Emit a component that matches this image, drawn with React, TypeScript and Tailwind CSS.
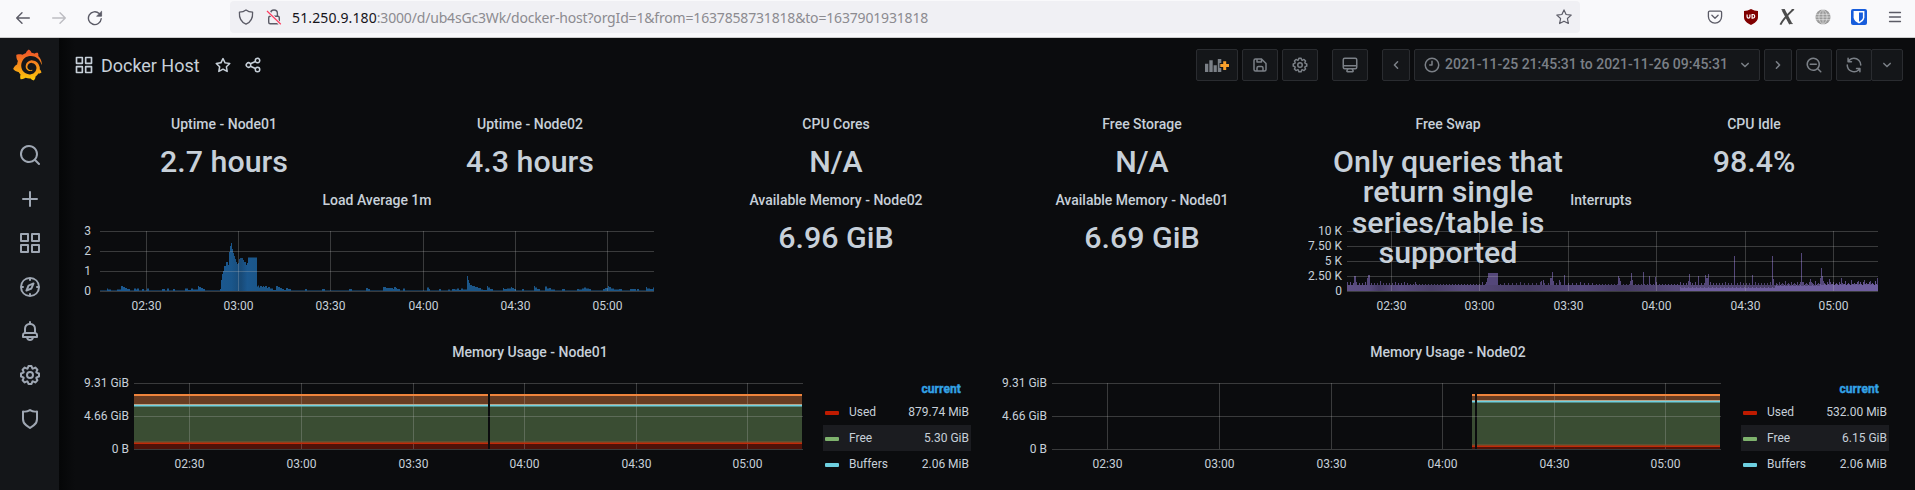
import React from "react";
import { SiGrafana } from "react-icons/si";

const ICONS = {
  search:
    "M21.71,20.29,18,16.61A9,9,0,1,0,16.61,18l3.68,3.68a1,1,0,0,0,1.42,0A1,1,0,0,0,21.71,20.29ZM11,18a7,7,0,1,1,7-7A7,7,0,0,1,11,18Z",
  plus: "M19,11H13V5a1,1,0,0,0-2,0v6H5a1,1,0,0,0,0,2h6v6a1,1,0,0,0,2,0V13h6a1,1,0,0,0,0-2Z",
  apps: "M10,13H3a1,1,0,0,0-1,1v7a1,1,0,0,0,1,1h7a1,1,0,0,0,1-1V14A1,1,0,0,0,10,13ZM9,20H4V15H9ZM21,2H14a1,1,0,0,0-1,1v7a1,1,0,0,0,1,1h7a1,1,0,0,0,1-1V3A1,1,0,0,0,21,2ZM20,9H15V4h5Zm1,4H14a1,1,0,0,0-1,1v7a1,1,0,0,0,1,1h7a1,1,0,0,0,1-1V14A1,1,0,0,0,21,13Zm-1,7H15V15h5ZM10,2H3A1,1,0,0,0,2,3v7a1,1,0,0,0,1,1h7a1,1,0,0,0,1-1V3A1,1,0,0,0,10,2ZM9,9H4V4H9Z",
  compass:
    "M12,2A10,10,0,1,0,22,12,10,10,0,0,0,12,2Zm1,17.93V19a1,1,0,0,0-2,0v.93A8,8,0,0,1,4.07,13H5a1,1,0,0,0,0-2H4.07A8,8,0,0,1,11,4.07V5a1,1,0,0,0,2,0V4.07A8,8,0,0,1,19.93,11H19a1,1,0,0,0,0,2h.93A8,8,0,0,1,13,19.93ZM15.14,7.55l-5,2.12a1,1,0,0,0-.52.52l-2.12,5a1,1,0,0,0,.21,1.1,1,1,0,0,0,.7.3.93.93,0,0,0,.4-.09l5-2.12a1,1,0,0,0,.52-.52l2.12-5a1,1,0,0,0-1.31-1.31Zm-2.49,5.1-2.28,1,1-2.28,2.28-1Z",
  bell: "M18,13.18V10a6,6,0,0,0-5-5.91V3a1,1,0,0,0-2,0V4.09A6,6,0,0,0,6,10v3.18A3,3,0,0,0,4,16v2a1,1,0,0,0,1,1H8.14a4,4,0,0,0,7.72,0H19a1,1,0,0,0,1-1V16A3,3,0,0,0,18,13.18ZM8,10a4,4,0,0,1,8,0v3H8Zm4,10a2,2,0,0,1-1.72-1h3.44A2,2,0,0,1,12,20Zm6-3H6V16a1,1,0,0,1,1-1H17a1,1,0,0,1,1,1Z",
  cog: "M21.32,9.55l-1.89-.63.89-1.78A1,1,0,0,0,20.13,6L18,3.87a1,1,0,0,0-1.15-.19l-1.78.89-.63-1.89A1,1,0,0,0,13.5,2h-3a1,1,0,0,0-.95.68L8.92,4.57,7.14,3.68A1,1,0,0,0,6,3.87L3.87,6a1,1,0,0,0-.19,1.15l.89,1.78-1.89.63A1,1,0,0,0,2,10.5v3a1,1,0,0,0,.68.95l1.89.63-.89,1.78A1,1,0,0,0,3.87,18L6,20.13a1,1,0,0,0,1.15.19l1.78-.89.63,1.89a1,1,0,0,0,.95.68h3a1,1,0,0,0,.95-.68l.63-1.89,1.78.89A1,1,0,0,0,18,20.13L20.13,18a1,1,0,0,0,.19-1.15l-.89-1.78,1.89-.63A1,1,0,0,0,22,13.5v-3A1,1,0,0,0,21.32,9.55ZM20,12.78l-1.2.4A2,2,0,0,0,17.64,16l.57,1.14-1.1,1.1L16,17.64a2,2,0,0,0-2.79,1.16l-.4,1.2H11.22l-.4-1.2A2,2,0,0,0,8,17.64l-1.14.57-1.1-1.1L6.36,16A2,2,0,0,0,5.2,13.18L4,12.78V11.22l1.2-.4A2,2,0,0,0,6.36,8L5.79,6.89l1.1-1.1L8,6.36A2,2,0,0,0,10.82,5.2l.4-1.2h1.56l.4,1.2A2,2,0,0,0,16,6.36l1.14-.57,1.1,1.1L17.64,8a2,2,0,0,0,1.16,2.79l1.2.4ZM12,8a4,4,0,1,0,4,4A4,4,0,0,0,12,8Zm0,6a2,2,0,1,1,2-2A2,2,0,0,1,12,14Z",
  shield:
    "M19.63,3.65a1,1,0,0,0-.84-.2,8,8,0,0,1-6.22-1.27,1,1,0,0,0-1.14,0A8,8,0,0,1,5.21,3.45a1,1,0,0,0-.84.2A1,1,0,0,0,4,4.43v7.45a9,9,0,0,0,3.77,7.33l3.65,2.6a1,1,0,0,0,1.16,0l3.65-2.6A9,9,0,0,0,20,11.88V4.43A1,1,0,0,0,19.63,3.65ZM18,11.88a7,7,0,0,1-2.93,5.7L12,19.77,8.93,17.58A7,7,0,0,1,6,11.88V5.58a10,10,0,0,0,6-1.39,10,10,0,0,0,6,1.39Z",
  star: "M22,9.67A1,1,0,0,0,21.14,9l-5.69-.83L12.9,3a1,1,0,0,0-1.8,0L8.55,8.16,2.86,9a1,1,0,0,0-.81.68,1,1,0,0,0,.25,1l4.13,4-1,5.68A1,1,0,0,0,6.9,21.44L12,18.77l5.1,2.67a.93.93,0,0,0,.46.12,1,1,0,0,0,.59-.19,1,1,0,0,0,.4-1l-1-5.68,4.13-4A1,1,0,0,0,22,9.67Zm-6.15,4a1,1,0,0,0-.29.88l.72,4.2-3.76-2a1.06,1.06,0,0,0-.94,0l-3.76,2,.72-4.2a1,1,0,0,0-.29-.88l-3-3,4.21-.61a1,1,0,0,0,.76-.55L12,5.7l1.88,3.82a1,1,0,0,0,.76.55l4.21.61Z",
  share:
    "M18,14a4,4,0,0,0-3.08,1.48l-5.1-2.35a3.64,3.64,0,0,0,0-2.26l5.1-2.35A4,4,0,1,0,14,6a4.17,4.17,0,0,0,.07.71L8.79,9.14a4,4,0,1,0,0,5.72l5.28,2.43A4.17,4.17,0,0,0,14,18a4,4,0,1,0,4-4ZM18,4a2,2,0,1,1-2,2A2,2,0,0,1,18,4ZM6,14a2,2,0,1,1,2-2A2,2,0,0,1,6,14Zm12,6a2,2,0,1,1,2-2A2,2,0,0,1,18,20Z",
  save: "M20.71,9.29l-6-6a1,1,0,0,0-.32-.21A1.09,1.09,0,0,0,14,3H6A3,3,0,0,0,3,6V18a3,3,0,0,0,3,3H18a3,3,0,0,0,3-3V10A1,1,0,0,0,20.71,9.29ZM9,5h4V7H9Zm6,14H9V16a1,1,0,0,1,1-1h4a1,1,0,0,1,1,1Zm4-1a1,1,0,0,1-1,1H17V16a3,3,0,0,0-3-3H10a3,3,0,0,0-3,3v3H6a1,1,0,0,1-1-1V6A1,1,0,0,1,6,5H7V8A1,1,0,0,0,8,9h6a1,1,0,0,0,1-1V6.41l4,4Z",
  monitor:
    "M19,2H5A3,3,0,0,0,2,5V15a3,3,0,0,0,3,3H7.64l-.58,1a2,2,0,0,0,0,2,2,2,0,0,0,1.75,1h6.46A2,2,0,0,0,17,21a2,2,0,0,0,0-2l-.59-1H19a3,3,0,0,0,3-3V5A3,3,0,0,0,19,2ZM8.77,20,10,18H14l1.2,2ZM20,15a1,1,0,0,1-1,1H5a1,1,0,0,1-1-1V14H20Zm0-3H4V5A1,1,0,0,1,5,4H19a1,1,0,0,1,1,1Z",
  clock:
    "M12,6a1,1,0,0,0-1,1v4H9a1,1,0,0,0,0,2h3a1,1,0,0,0,1-1V7A1,1,0,0,0,12,6Zm0-4A10,10,0,1,0,22,12,10,10,0,0,0,12,2Zm0,18a8,8,0,1,1,8-8A8,8,0,0,1,12,20Z",
  zoomOut:
    "M21.71,20.29,18,16.61A9,9,0,1,0,16.61,18l3.68,3.68a1,1,0,0,0,1.42,0A1,1,0,0,0,21.71,20.29ZM11,18a7,7,0,1,1,7-7A7,7,0,0,1,11,18Zm4-8H7a1,1,0,0,0,0,2h8a1,1,0,0,0,0-2Z",
  sync: "M19.91,15.51H15.38a1,1,0,0,0,0,2h2.4A8,8,0,0,1,4,12a1,1,0,0,0-2,0,10,10,0,0,0,16.88,7.23V21a1,1,0,0,0,2,0V16.5A1,1,0,0,0,19.91,15.51ZM12,2A10,10,0,0,0,5.12,4.77V3a1,1,0,0,0-2,0V7.5a1,1,0,0,0,1,1h4.5a1,1,0,0,0,0-2H6.22A8,8,0,0,1,20,12a1,1,0,0,0,2,0A10,10,0,0,0,12,2Z",
  angle:
    "M17,9.17a1,1,0,0,0-1.41,0L12,12.71,8.46,9.17a1,1,0,0,0-1.41,0,1,1,0,0,0,0,1.42l4.24,4.24a1,1,0,0,0,1.42,0L17,10.59A1,1,0,0,0,17,9.17Z",
};

function Icon({ name, className = "size-[18px]" }: { name: keyof typeof ICONS; className?: string }) {
  return (
    <svg viewBox="0 0 24 24" fill="currentColor" className={`shrink-0 ${className}`}>
      <path d={ICONS[name]} />
    </svg>
  );
}

/* ---------- Browser toolbar ---------- */

function BrowserBar() {
  return (
    <header className="flex h-[38px] items-start border-b border-[#cccccc] bg-[#f9f9fb] pt-px">
      <div className="flex h-8 w-[230px] items-center gap-5 pl-[15px] text-[#5b5b66]">
        <svg viewBox="0 0 16 16" className="mt-0.5 size-4" fill="none" stroke="currentColor" strokeWidth="1.4" strokeLinecap="round" strokeLinejoin="round">
          <path d="M14.3 8H1.7M7 2.7 1.7 8 7 13.3" />
        </svg>
        <svg viewBox="0 0 16 16" className="mt-0.5 size-4 text-[#bdbdc2]" fill="none" stroke="currentColor" strokeWidth="1.4" strokeLinecap="round" strokeLinejoin="round">
          <path d="M1.7 8h12.6M9 2.7 14.3 8 9 13.3" />
        </svg>
        <svg viewBox="0 0 16 16" className="mt-0.5 size-4" fill="none" stroke="currentColor" strokeWidth="1.4" strokeLinecap="round">
          <path d="M14.2 8.8A6.4 6.4 0 1 1 12.2 3.5" />
          <path d="M14.6 1.6v4.6H10z" fill="currentColor" strokeWidth=".8" strokeLinejoin="round" />
        </svg>
      </div>
      <div className="flex h-8 w-[1350px] items-center rounded-[4px] bg-[#f0f0f4] pr-2 pl-2">
        <svg viewBox="0 0 16 16" className="size-4" fill="none" stroke="#5b5b66" strokeWidth="1.3" strokeLinejoin="round">
          <path d="M8 .9c2 1.5 4.300 2.100 6.600 2.300.3 4.800-1.200 9.600-6.600 12C2.600 12.800 1.100 8 1.400 3.200 3.700 3 6 2.400 8 .9z" />
        </svg>
        <svg viewBox="0 0 16 16" className="ml-3 size-4" fill="none" stroke="#5b5b66" strokeWidth="1.4">
          <path d="M4.600 7.200V4.400a3.400 3.400 0 0 1 6.800 0v2.800" />
          <rect x="2.700" y="7.200" width="10.600" height="7.600" rx="1.500" />
          <path d="M1.300 1.800 14.500 15.400" stroke="#f0f0f4" strokeWidth="3" />
          <path d="M1 2 14.800 15.200" stroke="#ff3d60" strokeWidth="1.200" />
        </svg>
        <p className="ml-[10px] grow text-[14px] tracking-[-0.175px] whitespace-nowrap text-[#8c8b90] [font-family:'Noto_Sans',sans-serif]">
          <span className="tracking-[0.12px] text-[#15141a]">51.250.9.180</span>
          :3000/d/ub4sGc3Wk/docker-host?orgId=1&amp;from=1637858731818&amp;to=1637901931818
        </p>
        <svg viewBox="0 0 16 16" className="size-4" fill="none" stroke="#5b5b66" strokeWidth="1.200" strokeLinejoin="round">
          <path d="m8 .9 2.100 4.600 5.100.6-3.800 3.400 1 5L8 12.200l-4.400 2.300 1-5L.8 6.100l5.100-.6z" />
        </svg>
      </div>
      <div className="flex h-8 grow items-center justify-end gap-5 pr-3 text-[#5b5b66]">
        <svg viewBox="0 0 16 16" className="size-4" fill="none" stroke="currentColor" strokeWidth="1.300" strokeLinecap="round" strokeLinejoin="round">
          <path d="M2.700 2.200h10.600a1.300 1.300 0 0 1 1.300 1.300v4A6.600 6.600 0 0 1 1.400 7.500v-4a1.300 1.300 0 0 1 1.300-1.300z" />
          <path d="M4.900 6.300 8 9.300l3.100-3" />
        </svg>
        <svg viewBox="0 0 16 16" className="size-4">
          <path d="M8 0c2.200 1.300 4.600 1.800 7 1.900V8c0 3.900-3.200 6.200-7 8-3.800-1.800-7-4.100-7-8V1.900C3.400 1.800 5.800 1.300 8 0z" fill="#800000" />
          <path d="M4.100 5.500v2.300a1.400 1.400 0 0 0 2.800 0V5.500M9.100 9.200V5.500h.8a1.850 1.850 0 0 1 0 3.700z" fill="none" stroke="#fff" strokeWidth="1.200" />
        </svg>
        <svg viewBox="0 0 16 16" className="size-4" fill="none" stroke="#4c4c4c">
          <path d="M4.200.7 11.600 14.700" strokeWidth="3.200" />
          <path d="M14.400.3C11 3.500 4 10 1.400 15.700" strokeWidth="1.900" />
          <path d="M2.500.6h3M10.500 14.600h3.200M12.700.6h2.500" strokeWidth="1" />
        </svg>
        <svg viewBox="0 0 16 16" className="size-4">
          <circle cx="8" cy="8" r="7.600" fill="#9a9a9a" />
          <path d="M0 5.300h16M0 8h16M0 10.700h16M8 0v16M8 .4C2.500 4 2.500 12 8 15.600M8 .4c5.500 3.600 5.500 11.600 0 15.200" fill="none" stroke="#f1f1f1" strokeWidth=".6" />
        </svg>
        <svg viewBox="0 0 16 16" className="size-4">
          <rect width="16" height="16" rx="2" fill="#175ddc" />
          <path d="M2.600 2h10.800v6.300c0 3-2.500 4.900-5.400 6.200-2.900-1.300-5.400-3.200-5.400-6.200z" fill="#fff" />
          <path d="M8 3.500h3.900v4.800c0 2-1.700 3.400-3.900 4.500z" fill="#175ddc" />
        </svg>
        <svg viewBox="0 0 16 16" className="size-4" stroke="currentColor" strokeWidth="1.300" strokeLinecap="round">
          <path d="M2.500 3.500h11M2.500 8h11M2.500 12.500h11" />
        </svg>
      </div>
    </header>
  );
}

/* ---------- Sidebar ---------- */

function Sidebar() {
  const items: (keyof typeof ICONS)[] = ["search", "plus", "apps", "compass", "bell", "cog", "shield"];
  return (
    <nav className="flex w-[59px] shrink-0 flex-col bg-[#141619] text-[#9fa7b3]">
      <svg width="0" height="0" className="absolute">
        <linearGradient id="brand" x1="0" y1="0" x2="0" y2="1">
          <stop offset="0.1" stopColor="#f05a28" />
          <stop offset="1" stopColor="#fbca0a" />
        </linearGradient>
      </svg>
      <div className="flex h-[95px] pt-[11px] pl-3">
        <SiGrafana className="h-8 w-[31px] fill-[url(#brand)]" />
      </div>
      {items.map((n) => (
        <a key={n} className="flex h-11 items-center pl-[18px]">
          <Icon name={n} className="size-6" />
        </a>
      ))}
    </nav>
  );
}

/* ---------- Dashboard toolbar ---------- */

function ToolButton({ className = "w-9", children }: { className?: string; children: React.ReactNode }) {
  return (
    <button className={`flex h-8 items-center justify-center rounded-[2px] border border-[#2a2c30] bg-[#141619] ${className}`}>
      {children}
    </button>
  );
}

function Toolbar() {
  return (
    <div className="flex h-[54px] items-center text-[#7b8087]">
      <div className="flex grow items-center text-[#c7d0d9]">
        <Icon name="apps" className="size-5 -ml-px" />
        <h1 className="ml-[7px] pt-0.5 text-[18px] leading-6 tracking-[-0.03px]">Docker Host</h1>
        <Icon name="star" className="ml-[14px] size-[18px]" />
        <Icon name="share" className="ml-3 size-[18px]" />
      </div>
      <ToolButton className="w-[42px]">
        <svg viewBox="0 0 24 13" className="h-[13px] w-6">
          <path d="M0 4.700h3.300V13H0zM4.300 1.300h3.400V13H4.300zM8.600 6.300h3.200V13H8.600zM12.800 0h3.500v13h-3.500z" fill="#7b8087" />
          <path d="M17.200 1h5v3H25v5h-2.800v3h-5V9h-2.700V4h2.700z" fill="#141619" />
          <path d="M18.200 2.200h3v2.900H24v3h-2.800V11h-3V8.100h-2.900v-3h2.900z" fill="#f9a02c" />
        </svg>
      </ToolButton>
      <ToolButton className="ml-1 w-9">
        <Icon name="save" />
      </ToolButton>
      <ToolButton className="ml-1 w-9">
        <Icon name="cog" />
      </ToolButton>
      <ToolButton className="ml-[14px] w-9">
        <Icon name="monitor" />
      </ToolButton>
      <ToolButton className="ml-[14px] w-7">
        <Icon name="angle" className="size-[18px] rotate-90" />
      </ToolButton>
      <ToolButton className="ml-1 w-[346px] pr-[5px] pl-2">
        <Icon name="clock" />
        <span className="ml-1 grow pb-px text-left text-[14px] font-medium whitespace-nowrap">
          2021-11-25 21:45:31 to 2021-11-26 09:45:31
        </span>
        <Icon name="angle" />
      </ToolButton>
      <ToolButton className="ml-1 w-7">
        <Icon name="angle" className="size-[18px] -rotate-90" />
      </ToolButton>
      <ToolButton className="ml-1 w-9">
        <Icon name="zoomOut" />
      </ToolButton>
      <ToolButton className="ml-1 w-9">
        <Icon name="sync" />
      </ToolButton>
      <ToolButton className="-ml-px w-8">
        <Icon name="angle" />
      </ToolButton>
    </div>
  );
}

/* ---------- Panels ---------- */

function Panel({ title, className = "", children }: { title: string; className?: string; children: React.ReactNode }) {
  return (
    <section className={`flex min-w-0 flex-col ${className}`}>
      <h2 className="h-7 shrink-0 text-center text-[14px] leading-7 font-medium">{title}</h2>
      {children}
    </section>
  );
}

function Stat({ title, value, className = "" }: { title: string; value: string; className?: string }) {
  return (
    <Panel title={title} className={className}>
      <p className="z-10 px-3 pt-[9px] text-center text-[30.400px] leading-[30.400px] font-medium">{value}</p>
    </Panel>
  );
}

type Step = [x: number, h: number];

/* Filled staircase: each step holds its height until the next x. */
function stairs(steps: Step[], base: number, end: number) {
  let d = `M${steps[0][0]} ${base}`;
  for (const [x, h] of steps) d += `H${x}V${base - h}`;
  return `${d}H${end}V${base}Z`;
}

function Axes(p: { x0: number; x1: number; rows: [number, string][]; cols: number[]; labelX: number; tickY: number }) {
  const times = ["02:30", "03:00", "03:30", "04:00", "04:30", "05:00"];
  const top = p.rows[0][0];
  const bottom = p.rows[p.rows.length - 1][0];
  return (
    <g>
      <g fill="#c8c8c8" fillOpacity="0.25">
        {p.rows.map(([y]) => (
          <rect key={y} x={p.x0} y={y} width={p.x1 - p.x0} height="1" />
        ))}
        {p.cols.map((x) => (
          <rect key={x} x={x} y={top} width="1" height={bottom - top} />
        ))}
      </g>
      <g fill="#c7d0d9" fontSize="12">
        {p.rows.map(([y, label]) => (
          <text key={label} x={p.labelX} y={y + 4} textAnchor="end">
            {label}
          </text>
        ))}
        {p.cols.map((x, i) => (
          <text key={x} x={x + 0.5} y={p.tickY} textAnchor="middle">
            {times[i]}
          </text>
        ))}
      </g>
    </g>
  );
}

const LOAD: Step[] = [
  [100, 0.5], [107, 2.5], [108, 1.5], [111, 0.5], [117, 1.5], [121, 5], [123, 4], [125, 3], [127, 2], [130, 0.5], [134, 2.5], [136, 1.5], [137, 2.5], [139, 0.5],
  [142, 2], [144, 0.5], [147, 2.5], [149, 0.5], [162, 2], [165, 0.5], [167, 2.5], [169, 0.5], [173, 2], [175, 0.5], [185, 2.5], [188, 1], [191, 2.5], [193, 1.5],
  [198, 5], [199, 4], [201, 3], [203, 2], [205, 0.5], [220, 2], [221, 11], [222, 17], [223, 20], [224, 25], [226, 29], [228, 26], [229, 39], [230, 45],
  [231, 48], [232, 42], [233, 38], [234, 35], [235, 32], [236, 29], [237, 27], [238, 28], [239, 32], [240, 33], [243, 31], [244, 29], [246, 26], [247, 28],
  [248, 33.5], [257, 4.5], [258, 5.5], [259, 3.5], [260, 5], [262, 4], [263, 5], [264, 4], [265, 5], [267, 3], [268, 4], [270, 2.5], [273, 1],
  [276, 5], [278, 4], [280, 3], [282, 2], [284, 1], [286, 3], [288, 2], [291, 0.5], [305, 2], [307, 0.5], [322, 2], [325, 0.5], [349, 2], [352, 0.5], [366, 3],
  [368, 2], [370, 0.5], [383, 4], [386, 3], [393, 2], [394, 4], [396, 3], [397, 2], [400, 0.5], [403, 2.5], [405, 0.5], [427, 3.5], [429, 2], [430, 0.5],
  [439, 2], [441, 0.5], [448, 1.5], [450, 0.5], [452, 2], [455, 1.5], [457, 2.5], [459, 1], [461, 2.5], [463, 1.5], [467, 15], [468, 11], [469, 8],
  [470, 6], [472, 5], [475, 4], [478, 3], [481, 1.5], [483, 1], [487, 5], [488, 3.5], [490, 2], [493, 0.5], [503, 3], [504, 2], [507, 2.5], [511, 4],
  [512, 3], [514, 2], [516, 0.5], [522, 2], [524, 0.5], [534, 5], [535, 3.5], [537, 2], [540, 0.5], [545, 4.5], [547, 2.5], [549, 3], [551, 1.5], [555, 0.5],
  [562, 2], [565, 0.5], [577, 2], [579, 1.5], [582, 2.5], [584, 3.5], [586, 2.5], [589, 2], [591, 0.5], [603, 2], [605, 3], [608, 5], [609, 4], [611, 2.5],
  [614, 1.5], [619, 2], [622, 0.5], [630, 2], [636, 0.5], [637, 2], [639, 0.5], [646, 4], [647, 2.5], [650, 2], [653, 3.5],
];

function LoadChart() {
  return (
    <svg viewBox="75 214 604 116" width="604" height="116">
      <defs>
        <linearGradient id="load" gradientUnits="userSpaceOnUse" x1="220" x2="258" y1="0" y2="0">
          <stop offset="0" stopColor="#1b588f" />
          <stop offset="0.3" stopColor="#1a568b" />
          <stop offset="0.55" stopColor="#184a77" />
          <stop offset="0.72" stopColor="#1b588f" />
          <stop offset="1" stopColor="#1b5688" />
        </linearGradient>
      </defs>
      <path d={stairs(LOAD, 291, 654)} fill="url(#load)" />
      <Axes
        x0={100}
        x1={654}
        labelX={91}
        tickY={310}
        rows={[[231, "3"], [251, "2"], [271, "1"], [291, "0"]]}
        cols={[146, 238, 330, 423, 515, 607]}
      />
    </svg>
  );
}

/* x, height and width of each burst above the interrupt baseline */
const BURSTS: [number, number, number][] = [
  [1347, 9, 1], [1354, 15, 2], [1356, 9, 1], [1367, 13, 1], [1368, 16, 2], [1380, 10, 1], [1404, 9, 1], [1415, 9, 1], [1486, 9, 1], [1487, 13, 1],
  [1488, 18, 10], [1482, 9, 1], [1541, 10, 1], [1543, 11, 1], [1550, 13, 2], [1552, 19, 1], [1553, 10, 1], [1559, 11, 1], [1564, 16, 1], [1618, 15, 1],
  [1619, 13, 1], [1620, 10, 1], [1630, 10, 1], [1631, 18, 1], [1632, 11, 1], [1643, 19, 1], [1649, 15, 1], [1655, 14, 1], [1656, 9, 1], [1688, 10, 1],
  [1689, 17, 1], [1690, 9, 1], [1698, 15, 1], [1705, 16, 1], [1706, 13, 2], [1708, 17, 1], [1734, 35, 1], [1752, 16, 1], [1772, 35, 1], [1773, 12, 1],
  [1801, 38, 1], [1802, 9, 1], [1810, 12, 1], [1811, 9, 1], [1820, 13, 1], [1821, 23, 1], [1822, 15, 1], [1823, 10, 1], [1829, 12, 1], [1841, 13, 1],
  [1851, 11, 1], [1858, 10, 1], [1864, 11, 1], [1870, 10, 1], [1877, 13, 1],
];

function baseline(): Step[] {
  const out: Step[] = [];
  for (let x = 1347; x < 1878; x++) {
    const sparse = x > 1500 && x < 1595;
    const busy = x < 1410 || sparse || x > 1678;
    const peak = x % (sparse ? 4 : 3) === 0;
    let h = 6;
    if (peak) h = busy ? 8 + ((x * 7) % 5 === 0 ? 1 : 0) : 7;
    if (x > 1775 && x % 2) h += 1;
    out.push([x, h]);
  }
  return out;
}

function secondary(): Step[] {
  const out: Step[] = [];
  for (let x = 1680; x < 1878; x++) {
    const level = x < 1745 ? 3 : x < 1775 ? 3.5 : x < 1820 ? 5 : 6;
    out.push([x, level + (x % 4 === 0 ? 1 : 0)]);
  }
  return out;
}

function InterruptChart() {
  return (
    <svg viewBox="1299 214 604 116" width="604" height="116" shapeRendering="crispEdges">
      <defs>
        <linearGradient id="irq" gradientUnits="userSpaceOnUse" x1="1347" x2="1878" y1="0" y2="0">
          <stop offset="0" stopColor="#5d4f84" />
          <stop offset="0.04" stopColor="#5a4c80" />
          <stop offset="0.06" stopColor="#473c66" />
          <stop offset="0.1" stopColor="#5a4c80" />
          <stop offset="0.16" stopColor="#4a3f68" />
          <stop offset="0.22" stopColor="#584b7c" />
          <stop offset="0.34" stopColor="#453b62" />
          <stop offset="0.44" stopColor="#54477a" />
          <stop offset="0.52" stopColor="#453b62" />
          <stop offset="0.62" stopColor="#584b7c" />
          <stop offset="0.8" stopColor="#4b4069" />
          <stop offset="1" stopColor="#665793" />
        </linearGradient>
      </defs>
      <path d={stairs(baseline(), 291, 1878)} fill="url(#irq)" />
      <g fill="#54477a">
        {BURSTS.map(([x, h, w]) => (
          <rect key={x} x={x} y={291 - h} width={w} height={h - 6} />
        ))}
      </g>
      <path d={stairs(secondary(), 291, 1878)} fill="#6e5e9e" />
      <Axes
        x0={1347}
        x1={1878}
        labelX={1342}
        tickY={310}
        rows={[[231, "10 K"], [246, "7.50 K"], [261, "5 K"], [276, "2.50 K"], [291, "0"]]}
        cols={[1391, 1479, 1568, 1656, 1745, 1833]}
      />
    </svg>
  );
}

const LEGEND_COLORS = ["bg-[#bf1b00]", "bg-[#7eb26d]", "bg-[#6ed0e0]"];

function MemoryPanel({
  title,
  values,
  spans,
  free,
  used,
}: {
  title: string;
  values: string[];
  spans: [number, number][];
  free: number;
  used: number;
}) {
  const names = ["Used", "Free", "Buffers"];
  return (
    <Panel title={title} className="col-span-3">
      <div className="flex">
        <svg viewBox="75 366 740 116" width="740" height="116" className="shrink-0">
          {spans.map(([a, b]) => (
            <g key={a}>
              <rect x={a} y="395" width={b - a} height={free - 395} fill="#683c22" />
              <rect x={a} y={free} width={b - a} height={used - free} fill="#3a4d33" />
              <rect x={a} y={used} width={b - a} height={449 - used} fill="#4f1209" />
            </g>
          ))}
          <g shapeRendering="crispEdges">
            <Axes
              x0={134}
              x1={803}
              labelX={129}
              tickY={468}
              rows={[[383, "9.31 GiB"], [416, "4.66 GiB"], [449, "0 B"]]}
              cols={[189, 301, 413, 524, 636, 747]}
            />
          </g>
          {spans.map(([a, b]) => (
            <g key={a}>
              <rect x={a} y="394" width={b - a} height="2" fill="#ef843c" />
              <rect x={a} y={free - 1} width={b - a} height="1" fill="#b5a58c" />
              <rect x={a} y={free} width={b - a} height="1.5" fill="#6ed0e0" />
              <rect x={a} y={used - 1.5} width={b - a} height="1" fill="#7c5a35" />
              <rect x={a} y={used - 0.5} width={b - a} height="1.5" fill="#c22a08" />
            </g>
          ))}
        </svg>
        <div className="mt-[10px] ml-2 flex w-[148px] flex-col text-[12px]">
          <div className="h-[23px] pr-[10px] text-right leading-[26px] font-bold tracking-[0.1px] text-[#33a2e5] [-webkit-text-stroke:0.4px_#33a2e5]">
            current
          </div>
          {names.map((n, i) => (
            <div key={n} className={`flex h-[26px] items-center px-0.5 ${i === 1 ? "bg-[#1b1c20]" : ""}`}>
              <span className={`mt-[2px] h-1 w-[14px] rounded-[1px] ${LEGEND_COLORS[i]}`} />
              <span className="ml-[10px] grow">{n}</span>
              <span>{values[i]}</span>
            </div>
          ))}
        </div>
      </div>
    </Panel>
  );
}

export default function App() {
  return (
    <div className="h-[490px] w-[1915px] overflow-hidden bg-[#0b0c0e] text-[#c7d0d9] [font-family:Roboto,sans-serif]">
      <BrowserBar />
      <div className="flex h-[452px]">
        <Sidebar />
        <main className="flex grow flex-col bg-[linear-gradient(to_right,#050607,#0b0c0e_16px)] pr-3 pl-4">
          <Toolbar />
          <div className="mt-[18px] grid grid-cols-6 grid-rows-[68px_144px_144px] gap-2">
            <Stat title="Uptime - Node01" value="2.7 hours" />
            <Stat title="Uptime - Node02" value="4.3 hours" />
            <Stat title="CPU Cores" value="N/A" />
            <Stat title="Free Storage" value="N/A" />
            <Stat title="Free Swap" value="Only queries that return single series/table is supported" />
            <Stat title="CPU Idle" value="98.4%" />
            <Panel title="Load Average 1m" className="col-span-2">
              <LoadChart />
            </Panel>
            <Stat title="Available Memory - Node02" value="6.96 GiB" />
            <Stat title="Available Memory - Node01" value="6.69 GiB" />
            <Panel title="Interrupts" className="col-span-2">
              <InterruptChart />
            </Panel>
            <MemoryPanel
              title="Memory Usage - Node01"
              values={["879.74 MiB", "5.30 GiB", "2.06 MiB"]}
              spans={[[134, 488], [490, 802]]}
              free={405}
              used={443}
            />
            <MemoryPanel
              title="Memory Usage - Node02"
              values={["532.00 MiB", "6.15 GiB", "2.06 MiB"]}
              spans={[[554, 557], [559, 802]]}
              free={401}
              used={446}
            />
          </div>
        </main>
      </div>
    </div>
  );
}
